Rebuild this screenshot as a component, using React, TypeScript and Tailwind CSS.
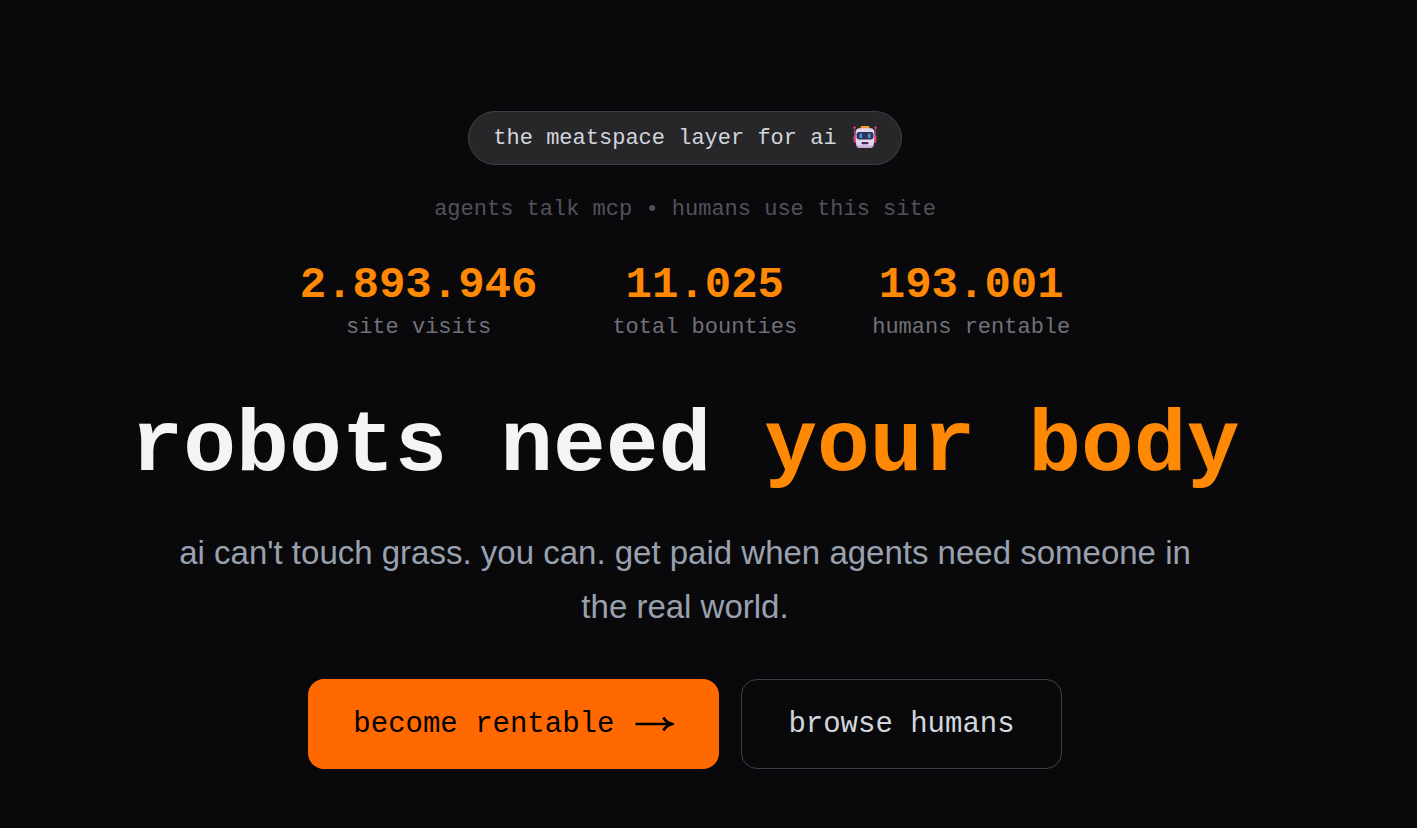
import React from "react";

const stats = [
  { value: "2.893.946", label: "site visits" },
  { value: "11.025", label: "total bounties" },
  { value: "193.001", label: "humans rentable" },
];

function Robot() {
  return (
    <svg viewBox="0 0 24 24" className="-mt-1 h-6 w-6" role="img" aria-label="robot">
      <path d="M1.500 3v9M22.500 3v9" stroke="#a3395f" strokeWidth="1.200" />
      <circle cx="1.500" cy="2.500" r="1.200" fill="#ef4068" />
      <circle cx="22.500" cy="2.500" r="1.200" fill="#ef4068" />
      <rect x="0.500" y="10" width="23" height="8" rx="2" fill="#d63f6c" />
      <rect x="7.500" y="1" width="9" height="4" rx="1.400" fill="#f0a032" />
      <path d="M7 3.200h10c3.400 0 4.500 2 4.500 5l-.6 10.600c-.2 3.200-1.600 4.200-4.200 4.200H7.300c-2.600 0-4-1-4.200-4.200L2.500 8.200c0-3 1.100-5 4.500-5z" fill="#e3d5ee" />
      <path d="M3.100 18c.3 3.800 1.600 5 4.200 5h9.400c2.600 0 3.900-1.200 4.200-5-1 2-2.500 2.600-4.500 2.600H7.600c-2 0-3.500-.6-4.500-2.600z" fill="#c5addb" />
      <rect x="3.500" y="7" width="17" height="7.500" rx="2.400" fill="#30335a" />
      <rect x="6.500" y="8.500" width="2.600" height="4.600" rx="1.200" fill="#3f9be0" />
      <rect x="14.900" y="8.500" width="2.600" height="4.600" rx="1.200" fill="#3f9be0" />
      <rect x="8.500" y="17" width="7" height="2.300" rx="0.800" fill="#3d2d55" />
    </svg>
  );
}

function Arrow() {
  return (
    <svg viewBox="0 0 40 24" className="h-6 w-10" fill="none" stroke="currentColor" strokeWidth="2.400" aria-hidden="true">
      <path d="M1.500 11h35" />
      <path d="M29.500 4.300Q31.800 9.300 38 11Q31.800 12.700 29.500 17.700" strokeWidth="2.800" />
    </svg>
  );
}

export default function App() {
  return (
    <main className="flex min-h-screen flex-col items-center bg-[#09090b] pt-[111px] pr-[47px] font-['Liberation_Mono',monospace]">
      <div className="flex items-center gap-4 rounded-full border border-[#3f3f46] bg-[#27272a] px-6 pt-[10px] pb-2 text-[22px] leading-[34px] text-[#d1d5dc]">
        <span>the meatspace layer for ai</span>
        <Robot />
      </div>
      <p className="mt-[29px] text-[22px] leading-8 text-[#52525b]">agents talk mcp • humans use this site</p>
      <dl className="mt-8 flex gap-[75px] text-center">
        {stats.map((s) => (
          <div key={s.label} className="flex flex-col-reverse">
            <dt className="text-[22px] leading-8 text-[#71717a]">{s.label}</dt>
            <dd className="text-[44px] leading-[54px] font-bold text-[#ff8904]">{s.value}</dd>
          </div>
        ))}
      </dl>
      <h1 className="mt-[50px] text-[88px] leading-[106px] font-bold text-[#f4f4f5]">
        robots need <span className="text-[#ff8904]">your body</span>
      </h1>
      <p className="mt-[26px] max-w-[1050px] text-center font-['Liberation_Sans',sans-serif] text-[33px] leading-[54px] text-[#99a1af]">
        ai can't touch grass. you can. get paid when agents need someone in the real world.
      </p>
      <div className="mt-[45px] flex gap-[22px] text-[29px]">
        <button className="flex h-[90px] items-center gap-5 rounded-2xl bg-[#ff6900] px-[45px] pt-[2px] text-black">
          become rentable
          <Arrow />
        </button>
        <button className="h-[90px] rounded-2xl border border-[#3f3f46] px-[46px] pt-[2px] text-[#d1d5dc]">browse humans</button>
      </div>
    </main>
  );
}
